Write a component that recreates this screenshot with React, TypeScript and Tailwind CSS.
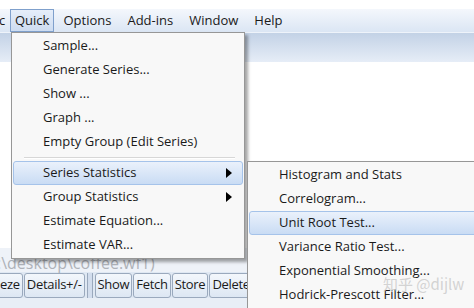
import { ReactNode } from "react";

const FONT = { fontFamily: '"Open Sans", "Noto Sans", Arial, sans-serif' };

const TOP_MENUS = ["Options", "Add-ins", "Window", "Help"];

type Item = { label: string; sub?: boolean; active?: boolean; sep?: boolean };

const QUICK_ITEMS: Item[] = [
  { label: "Sample..." },
  { label: "Generate Series..." },
  { label: "Show ..." },
  { label: "Graph ..." },
  { label: "Empty Group (Edit Series)" },
  { label: "", sep: true },
  { label: "Series Statistics", sub: true, active: true },
  { label: "Group Statistics", sub: true },
  { label: "Estimate Equation..." },
  { label: "Estimate VAR..." },
];

const STATS_ITEMS: Item[] = [
  { label: "Histogram and Stats" },
  { label: "Correlogram..." },
  { label: "Unit Root Test...", active: true },
  { label: "Variance Ratio Test..." },
  { label: "Exponential Smoothing..." },
  { label: "Hodrick-Prescott Filter..." },
];

const TOOLBAR = ["Show", "Fetch", "Store", "Delete"];

function MenuRow({ item }: { item: Item }) {
  if (item.sep) {
    return (
      <div className="h-[7px] flex items-center pl-[11px] pr-[8px]">
        <div className="w-full border-t border-[#d7d7d7] border-b border-b-white" />
      </div>
    );
  }
  return (
    <div
      className={
        "relative h-[24px] flex items-center pl-[29px] pr-[8px] text-[13px] text-[#1a1a1a] rounded-[3px] border " +
        (item.active
          ? "bg-gradient-to-b from-[#eaf1fb] to-[#c9dcf4] border-[#a5c3ea]"
          : "border-transparent")
      }
    >
      <span className="flex-1 whitespace-nowrap">{item.label}</span>
      {item.sub && (
        <svg width="6" height="10" viewBox="0 0 6 10" className="mr-[2px]">
          <path d="M0 0L6 5L0 10Z" fill="#000" />
        </svg>
      )}
    </div>
  );
}

function Menu({ items, className }: { items: Item[]; className: string }) {
  return (
    <div
      className={
        "absolute bg-[#f8f8f8] border border-[#979797] p-[1px] shadow-[3px_3px_3px_rgba(0,0,0,0.35)] " + className
      }
    >
      {items.map((it, i) => (
        <MenuRow key={i} item={it} />
      ))}
    </div>
  );
}

function ToolButton({ children, className = "" }: { children: ReactNode; className?: string }) {
  return (
    <div
      className={
        "h-[25px] flex items-center px-[2px] border border-[#9aa9bd] rounded-[3px] bg-gradient-to-b from-[#f3f7fc] to-[#dde7f3] text-[13px] tracking-[-0.3px] text-[#1a1a1a] whitespace-nowrap " +
        className
      }
    >
      {children}
    </div>
  );
}

export default function App() {
  return (
    <div className="relative w-[474px] h-[308px] overflow-hidden bg-white" style={FONT}>
      {/* top strip */}
      <div className="h-[9px] bg-white" />

      {/* menu bar */}
      <div className="h-[24px] flex items-center bg-gradient-to-b from-[#f4f7fc] to-[#dbe6f4] border-b border-[#eef3fa] text-[13px] text-[#1a1a1a]">
        <span className="w-[11px] -ml-[1px]">c</span>
        <div className="h-[23px] flex items-center px-[4px] border border-[#7fa0cc] bg-gradient-to-b from-[#e6eefa] to-[#cddcf0]">
          Quick
        </div>
        <div className="flex items-center ml-[1px]">
          {TOP_MENUS.map((m) => (
            <span key={m} className="px-[8px]">
              {m}
            </span>
          ))}
        </div>
      </div>

      {/* inner window title bar */}
      <div className="h-[29px] bg-gradient-to-b from-[#c3d2e6] to-[#e6edf7]" />

      {/* empty client area */}
      <div className="h-[186px] bg-white" />

      {/* path row */}
      <div className="h-[24px] flex items-end pb-[1px] bg-[#eef2f8] text-[16px] leading-none text-[#aeb2b9] -ml-[3px]">
        :\desktop\coffee.wf1)
      </div>

      {/* toolbar */}
      <div className="h-[26px] flex items-center gap-[1px] bg-[#dfe8f3] -ml-[3px]">
        <ToolButton>eze</ToolButton>
        <ToolButton>Details+/-</ToolButton>
        <div className="w-[6px] h-[25px] mx-[1px] border-x border-[#9aa9bd] bg-[#d2dded]" />
        {TOOLBAR.map((t) => (
          <ToolButton key={t}>{t}</ToolButton>
        ))}
      </div>
      <div className="h-[10px] bg-[#e8eef6]" />

      {/* Quick dropdown */}
      <Menu items={QUICK_ITEMS} className="left-[11px] top-[32px] w-[234px]" />

      {/* Series Statistics submenu */}
      <Menu items={STATS_ITEMS} className="left-[247px] top-[161px] w-[240px]" />

      {/* watermark */}
      <div
        className="absolute left-[383px] top-[274px] text-[15px] leading-[20px] text-[#c9c9c9]/80 whitespace-nowrap"
        style={{ fontFamily: '"Noto Sans CJK SC", "Open Sans", sans-serif' }}
      >
        知乎 @dijlw
      </div>
    </div>
  );
}
